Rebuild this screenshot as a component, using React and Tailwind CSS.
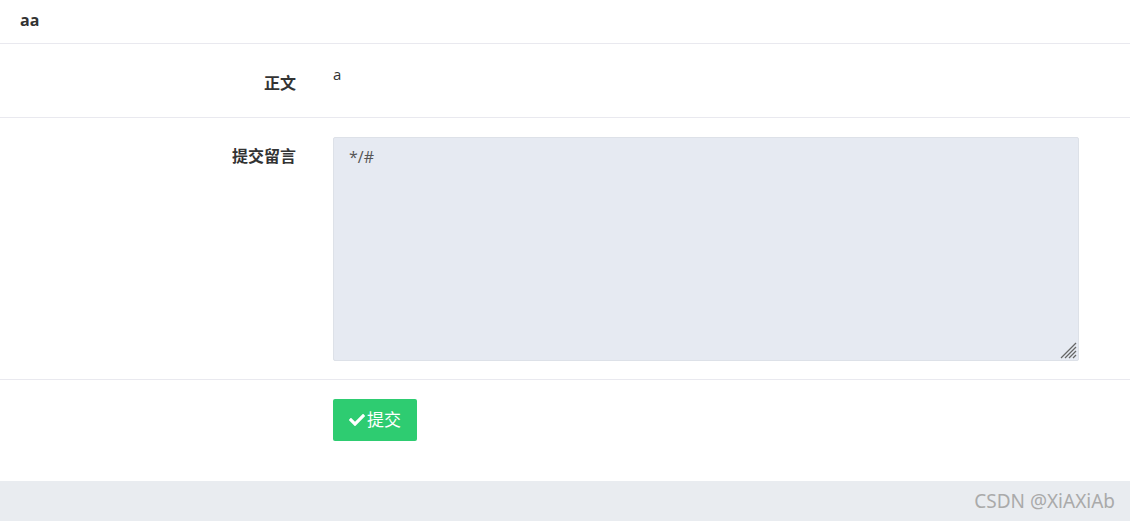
import React from 'react';
import { FaCheck } from 'react-icons/fa';

const font = { fontFamily: '"Open Sans", "Noto Sans CJK SC", sans-serif' };

const App = () => {
  return (
    <div className="w-[1130px] h-[521px] bg-white flex flex-col text-[#333]" style={font}>
      <div className="h-[44px] px-5 pb-[4px] flex items-center border-b border-[#e9e9ef]">
        <span className="text-[16px] font-bold text-[#333]">aa</span>
      </div>

      <div className="h-[74px] flex border-b border-[#e9e9ef]">
        <div className="w-[296px] pt-[27px] text-right text-[16px] font-bold leading-[24px]">正文</div>
        <div className="pl-[37px] pt-[20px] text-[15px] leading-[20px]">a</div>
      </div>

      <div className="h-[262px] flex border-b border-[#e9e9ef]">
        <div className="w-[296px] pt-[26px] text-right text-[16px] font-bold leading-[24px]">提交留言</div>
        <div className="pl-[37px] pt-[19px]">
          <div className="relative">
            <textarea
              defaultValue="*/#"
              className="block w-[746px] h-[224px] bg-[#e6eaf2] border border-[#dde1e8] rounded-[2px] px-[15px] pt-[7px] text-[16px] text-[#555] outline-none resize-none"
              style={font}
            />
            <svg className="absolute right-[2px] bottom-[2px]" width="17" height="17" viewBox="0 0 17 17">
              <g stroke="#666" strokeWidth="1.3">
                <line x1="1" y1="16" x2="16" y2="1" />
                <line x1="5" y1="16" x2="16" y2="5" />
                <line x1="9" y1="16" x2="16" y2="9" />
                <line x1="13" y1="16" x2="16" y2="13" />
              </g>
            </svg>
          </div>
        </div>
      </div>

      <div className="h-[101px] flex">
        <div className="w-[296px]" />
        <div className="pl-[37px] pt-[19px]">
          <button className="w-[84px] h-[42px] bg-[#2ecc71] rounded-[2px] text-white text-[17px] flex items-center justify-center gap-[2px]">
            <FaCheck size={16} />
            提交
          </button>
        </div>
      </div>

      <div className="flex-1 bg-[#e9ecf0] flex items-center justify-end pr-[15px]">
        <span className="text-[19px] text-[#aaa]" style={{ fontFamily: '"Noto Sans", sans-serif' }}>CSDN @XiAXiAb</span>
      </div>
    </div>
  );
};

export default App;
